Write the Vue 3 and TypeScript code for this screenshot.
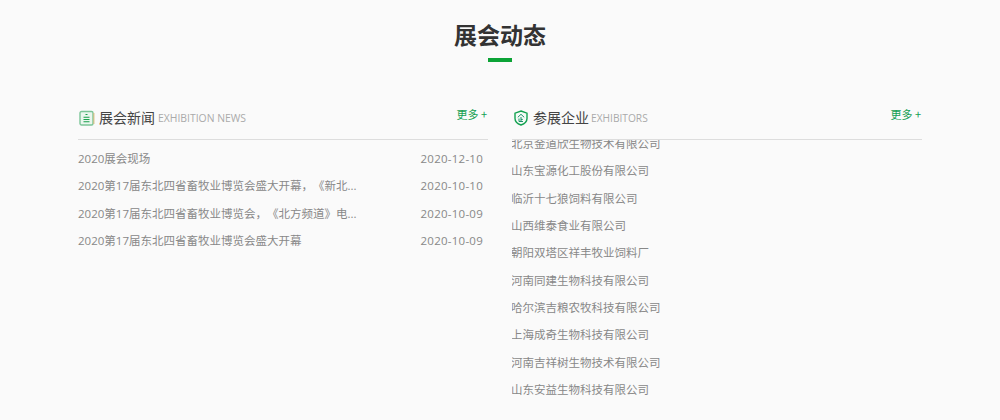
<script setup lang="ts">
const news = [
  { title: '2020展会现场', date: '2020-12-10' },
  { title: '2020第17届东北四省畜牧业博览会盛大开幕，《新北...', date: '2020-10-10' },
  { title: '2020第17届东北四省畜牧业博览会，《北方频道》电...', date: '2020-10-09' },
  { title: '2020第17届东北四省畜牧业博览会盛大开幕', date: '2020-10-09' },
]
const companies = [
  '北京金道欣生物技术有限公司',
  '山东宝源化工股份有限公司',
  '临沂十七狼饲料有限公司',
  '山西维泰食业有限公司',
  '朝阳双塔区祥丰牧业饲料厂',
  '河南同建生物科技有限公司',
  '哈尔滨吉粮农牧科技有限公司',
  '上海成奇生物科技有限公司',
  '河南吉祥树生物技术有限公司',
  '山东安益生物科技有限公司',
]
</script>

<template>
  <div class="page">
    <h1 class="title">展会动态</h1>
    <div class="accent"></div>
    <div class="cols">
      <section class="col">
        <header class="head">
          <svg class="icon" width="16" height="16" viewBox="0 0 16 16" fill="none">
            <rect x="1" y="1.5" width="13" height="13.5" rx="1.5" fill="#eaf6ee" stroke="#7cc598" stroke-width="1.4" />
            <path d="M14.9 3v11" stroke="#d9b877" stroke-width="1" />
            <path d="M6.5 4.5h2M4.5 7.2h6M4.5 9.5h6M4.5 11.8h6" stroke="#19a04b" stroke-width="1.1" />
          </svg>
          <span class="zh">展会新闻</span>
          <span class="en">EXHIBITION NEWS</span>
          <span class="more">更多 +</span>
        </header>
        <ul class="list news">
          <li v-for="n in news" :key="n.title + n.date" class="row">
            <span>{{ n.title }}</span>
            <span class="date">{{ n.date }}</span>
          </li>
        </ul>
      </section>
      <section class="col">
        <header class="head">
          <svg class="icon" width="16" height="16" viewBox="0 0 16 16" fill="none">
            <path d="M8 1 14 3.2V8.5C14 11.8 11 14 8 15 5 14 2 11.8 2 8.5V3.2Z" stroke="#12a150" stroke-width="1.4" fill="#f4fbf6" />
            <path d="M8 4.3 4.8 7.3M8 4.3l3.2 3M8 7v4.5M6 8.5v3h4M9.8 9.4H8" stroke="#1b8f6a" stroke-width="1" />
          </svg>
          <span class="zh">参展企业</span>
          <span class="en en-short">EXHIBITORS</span>
          <span class="more">更多 +</span>
        </header>
        <div class="scroller">
          <ul class="list companies">
            <li v-for="c in companies" :key="c" class="row">{{ c }}</li>
          </ul>
        </div>
      </section>
    </div>
  </div>
</template>

<style>
html, body { margin: 0; background: #fafafa; overflow: hidden; }
</style>

<style scoped>
.page {
  height: 420px;
  box-sizing: border-box;
  padding: 17px 78px 0;
  overflow: hidden;
  font-family: "Open Sans", "Noto Sans CJK SC", sans-serif;
  color: #888;
  font-feature-settings: "chws" 0;
  text-spacing-trim: space-all;
}
.title {
  margin: 0;
  height: 34px;
  line-height: 34px;
  text-align: center;
  font-size: 23px;
  font-weight: 700;
  font-family: "Noto Sans CJK SC", sans-serif;
  color: #333;
}
.accent {
  width: 24px;
  height: 4px;
  margin: 7px auto 0;
  background: #0ca336;
}
.cols {
  display: grid;
  grid-template-columns: 410px 410px;
  column-gap: 24px;
  margin-top: 40px;
}
.head {
  display: flex;
  align-items: center;
  height: 30px;
  padding-bottom: 7px;
  border-bottom: 1px solid #ddd;
  box-sizing: content-box;
}
.icon { margin: 2px 4px 0 1px; flex: none; }
.zh { font-size: 14px; color: #444; font-family: "Noto Sans CJK SC", sans-serif; }
.en { font-size: 10.4px; color: #aaa; margin-left: 3px; margin-top: 1px; }
.en-short { margin-left: 2px; font-size: 10.2px; }
.more {
  margin-left: auto;
  margin-right: 1px;
  margin-top: -6px;
  font-size: 11px;
  color: #13a052;
  font-family: "Noto Sans CJK SC", sans-serif;
}
.list { list-style: none; margin: 0; padding: 0; }
.news { padding-top: 5px; }
.row {
  display: flex;
  justify-content: space-between;
  height: 27.33px;
  line-height: 27.33px;
  font-size: 11.5px;
  white-space: nowrap;
}
.date { font-size: 11.5px; letter-spacing: 0.25px; padding-right: 5px; }
.scroller { height: 280px; overflow: hidden; }
.companies { margin: -10px 0 0 -1px; }
</style>
